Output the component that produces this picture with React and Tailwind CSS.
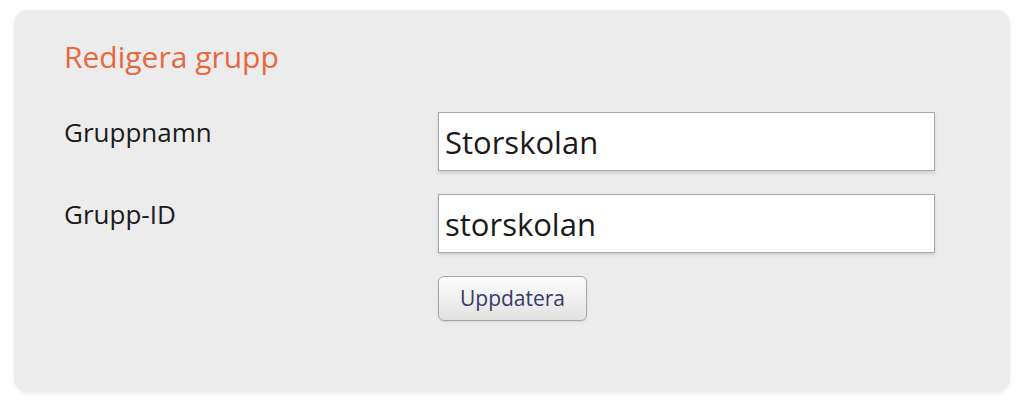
import React from 'react';

const font = { fontFamily: '"Open Sans", "Liberation Sans", sans-serif' };

const Field = ({ label, value }) => (
  <div className="flex items-start">
    <label className="w-[374px] shrink-0 pt-[7px] text-[26px] leading-none text-[#1b1b1b]">{label}</label>
    <input
      defaultValue={value}
      className="h-[59px] w-[497px] border border-[#a8a8a8] bg-white pl-[6px] text-[31px] text-[#1a1a1a] shadow-[0_2px_3px_rgba(0,0,0,0.12)] outline-none"
    />
  </div>
);

export default function App() {
  return (
    <div className="min-h-[400px] bg-white pt-[10px] px-[14px]" style={font}>
      <div className="h-[382px] rounded-[14px] bg-[#ececec] pl-[50px] pt-[32px] shadow-[0_2px_4px_rgba(0,0,0,0.07)]">
        <h1 className="text-[30px] leading-none font-normal text-[#e8683e]">Redigera grupp</h1>
        <div className="mt-[40px] flex flex-col gap-[23px]">
          <Field label="Gruppnamn" value="Storskolan" />
          <Field label="Grupp-ID" value="storskolan" />
          <div className="flex">
            <div className="w-[374px] shrink-0" />
            <button className="h-[45px] w-[149px] rounded-[6px] border border-[#a6a6a6] bg-gradient-to-b from-[#fdfdfd] to-[#e2e2e2] text-[21px] text-[#363b6b] shadow-[0_1px_2px_rgba(0,0,0,0.1)]">
              Uppdatera
            </button>
          </div>
        </div>
      </div>
    </div>
  );
}
